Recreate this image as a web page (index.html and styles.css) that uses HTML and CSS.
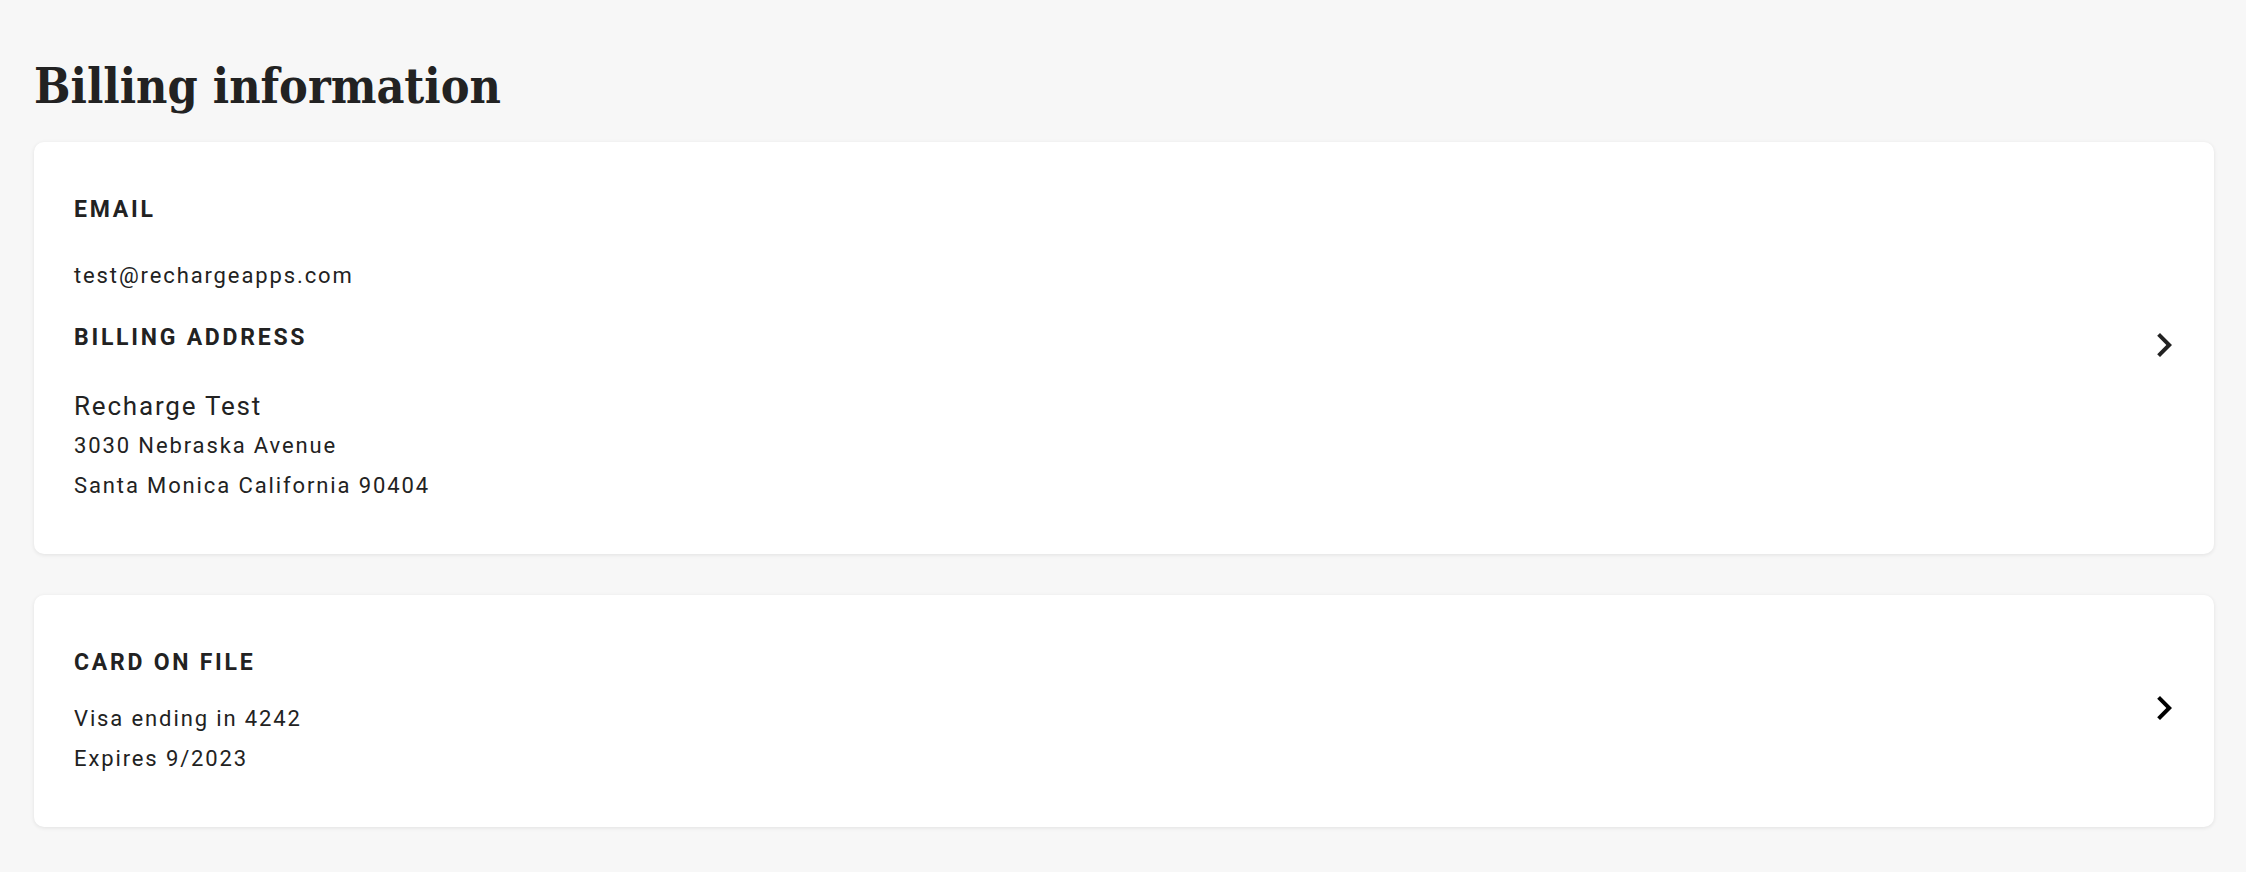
FILE: index.html
```html
<!DOCTYPE html>
<html lang="en">
<head>
<meta charset="utf-8">
<title>Billing information</title>
<link rel="stylesheet" href="styles.css">
</head>
<body>
<main class="page">
  <h1 class="page-title">Billing information</h1>

  <section class="card">
    <div class="card-body">
      <h2 class="label">EMAIL</h2>
      <p class="value value-email">test@rechargeapps.com</p>
      <h2 class="label label-spaced">BILLING ADDRESS</h2>
      <div class="address">
        <p class="address-name">Recharge Test</p>
        <p class="value">3030 Nebraska Avenue</p>
        <p class="value">Santa Monica California 90404</p>
      </div>
    </div>
    <svg class="chevron" viewBox="0 0 24 24" aria-hidden="true"><path d="M10 6L8.59 7.41 13.17 12l-4.58 4.59L10 18l6-6z"/></svg>
  </section>

  <section class="card">
    <div class="card-body">
      <h2 class="label">CARD ON FILE</h2>
      <div class="card-details">
        <p class="value">Visa ending in 4242</p>
        <p class="value">Expires 9/2023</p>
      </div>
    </div>
    <svg class="chevron chevron-dark" viewBox="0 0 24 24" aria-hidden="true"><path d="M10 6L8.59 7.41 13.17 12l-4.58 4.59L10 18l6-6z"/></svg>
  </section>
</main>
</body>
</html>
```

FILE: styles.css
```css
* {
  box-sizing: border-box;
}

html,
body {
  margin: 0;
  padding: 0;
  background: #f7f7f7;
}

body {
  font-family: Roboto, "Noto Sans", sans-serif;
  color: #222222;
}

.page {
  padding: 58px 32px 40px 34px;
  display: flex;
  flex-direction: column;
  gap: 41px;
}

.page-title {
  margin: 0 0 -13px 0;
  font-family: "DejaVu Serif Condensed", "DejaVu Serif", "Liberation Serif", serif;
  font-stretch: condensed;
  font-weight: 700;
  font-size: 48px;
  line-height: 56px;
  color: #222222;
}

.card {
  background: #ffffff;
  border-radius: 10px;
  box-shadow: 0 1px 4px rgba(0, 0, 0, 0.09);
  padding: 52px 26px 48px 40px;
  display: flex;
  align-items: center;
}

.card-body {
  flex: 1;
  display: flex;
  flex-direction: column;
}

.label {
  margin: 0;
  font-size: 23px;
  line-height: 32px;
  font-weight: 700;
  letter-spacing: 2.75px;
}

.label-spaced {
  margin-top: 26px;
}

.value {
  margin: 0;
  font-size: 22px;
  line-height: 40px;
  letter-spacing: 1.88px;
}

.value-email {
  margin-top: 30px;
}

.address {
  margin-top: 32px;
}

.address-name {
  margin: 0;
  font-size: 26px;
  line-height: 40px;
  letter-spacing: 1.8px;
}

.card-details {
  margin-top: 20px;
}

.chevron {
  width: 48px;
  height: 48px;
  margin-bottom: 10px;
  fill: #222222;
  flex: none;
}

.chevron-dark {
  fill: #000000;
}
```
